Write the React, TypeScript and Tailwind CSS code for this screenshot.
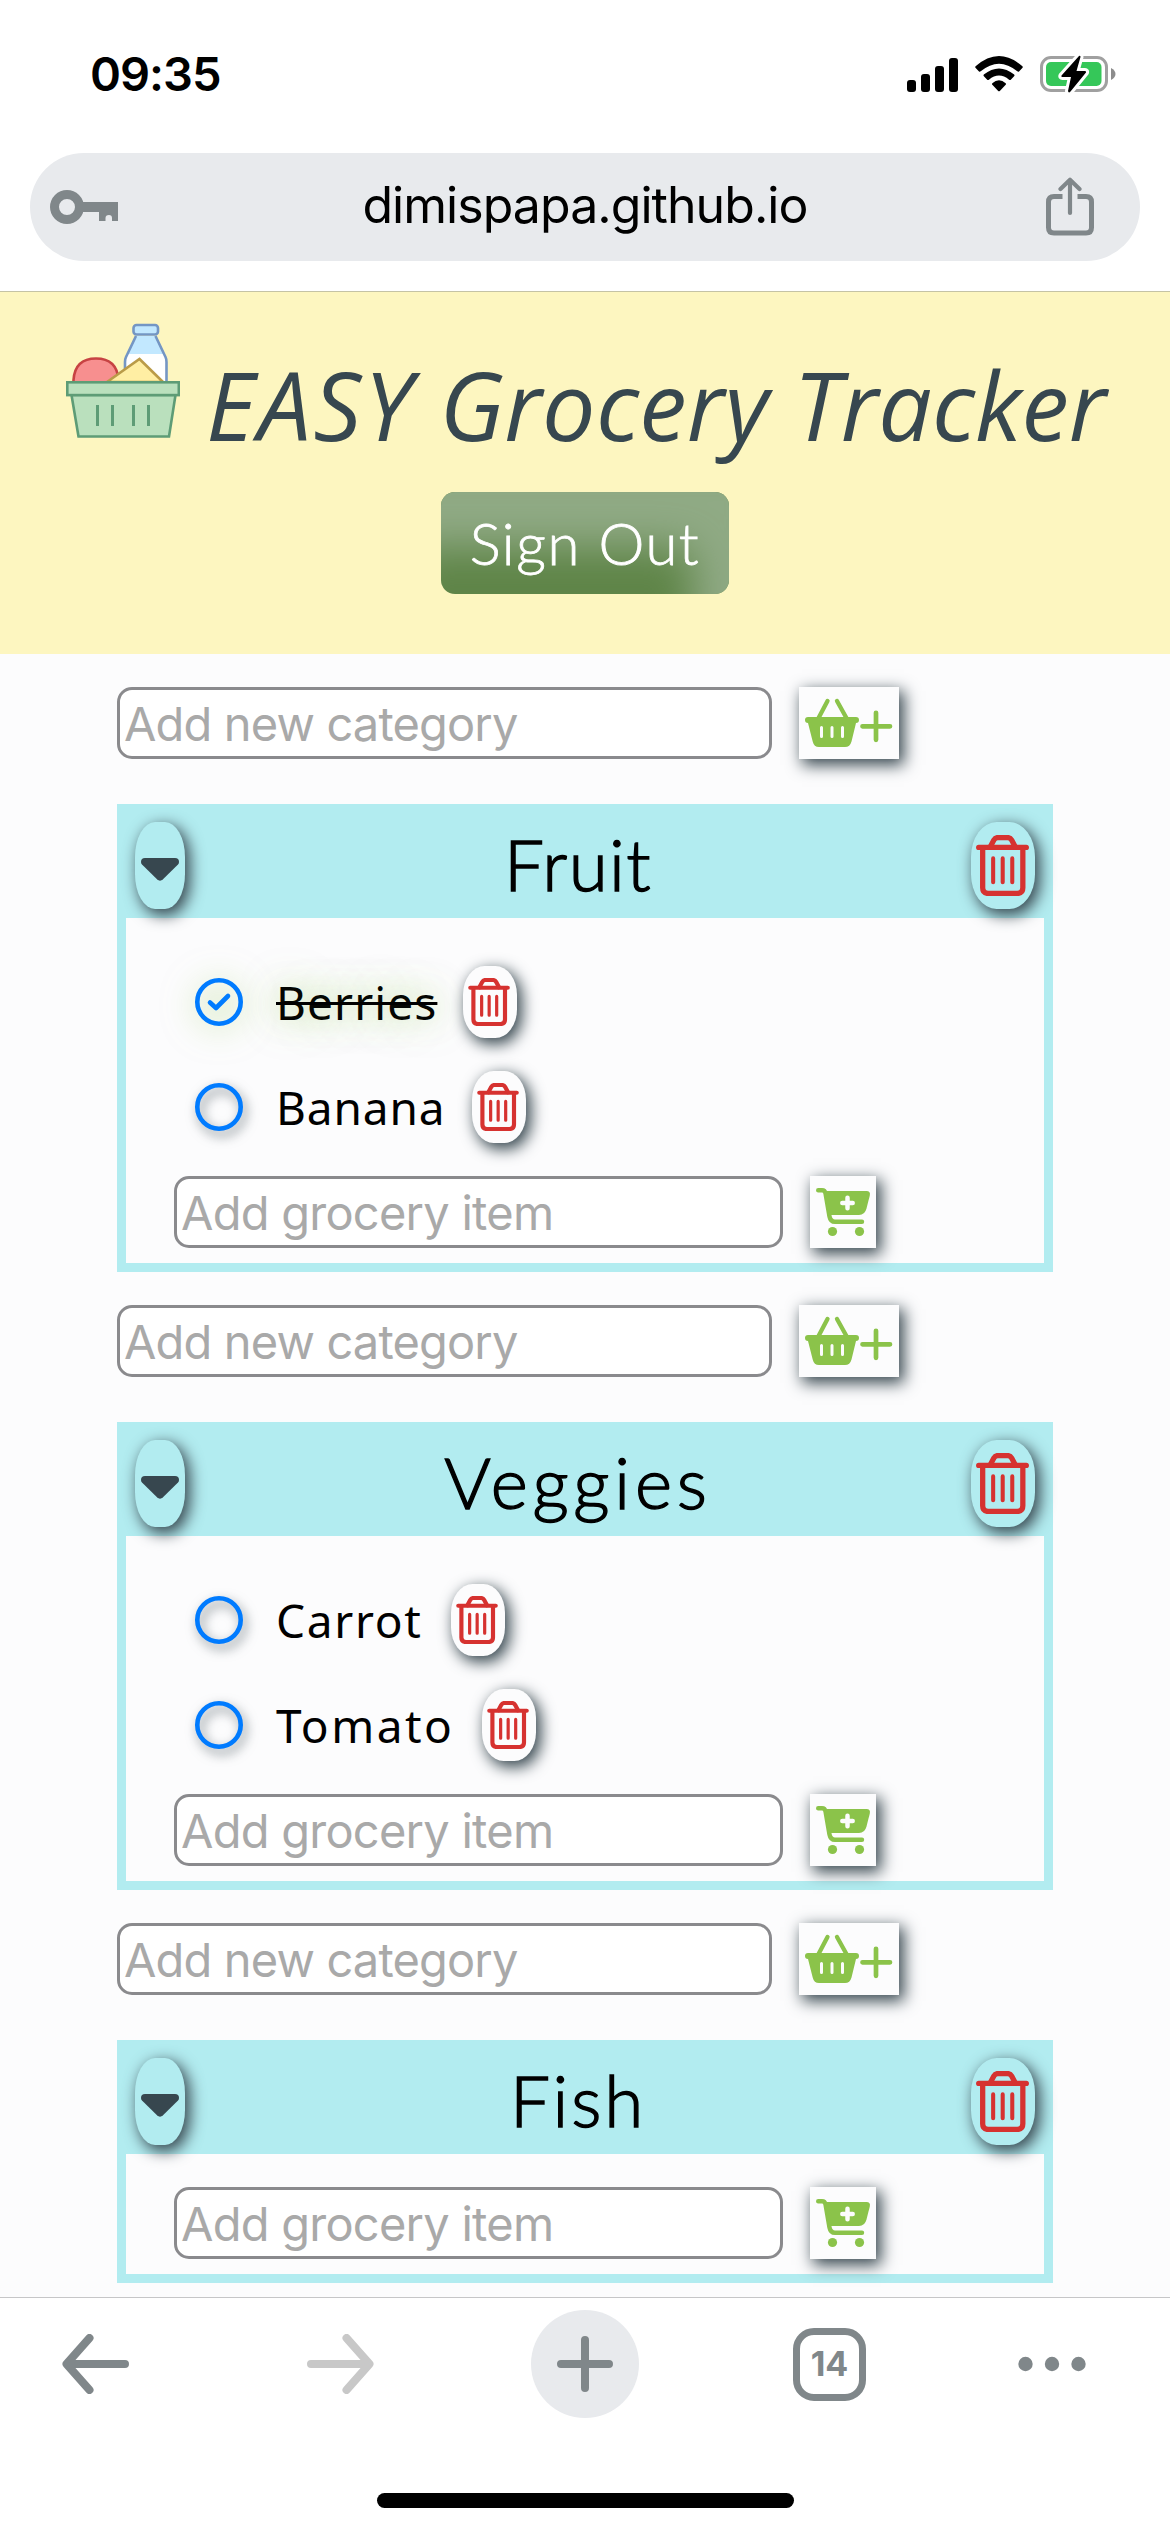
import React from "react";

const SHADOW = "shadow-[4px_5px_15px_1px_#37474f]";

function SignalIcon() {
  return (
    <svg className="h-[36px] w-[52px]" viewBox="0 0 52 36">
      <rect x="0" y="24" width="9" height="12" rx="3" />
      <rect x="14" y="18" width="9" height="18" rx="3" />
      <rect x="28" y="10" width="9" height="26" rx="3" />
      <rect x="42" y="2" width="9" height="34" rx="3" />
    </svg>
  );
}

function WifiIcon() {
  return (
    <svg className="h-[36px] w-[48px]" viewBox="0 0 48 36">
      <path d="M0.6 10.2 Q-0.3 11.2 0.7 12.1 L4 15.4 Q4.8 16.1 5.7 15.3 Q24 0 42.3 15.3 Q43.2 16.1 44 15.4 L47.3 12.1 Q48.3 11.2 47.4 10.2 Q24 -10.200 0.600 10.2 Z" />
      <path d="M8.800 18.500 Q8 19.400 8.900 20.300 L12.200 23.700 Q13 24.400 13.900 23.700 Q24 15.400 34.100 23.700 Q35 24.400 35.800 23.700 L39.100 20.300 Q40 19.400 39.200 18.500 Q24 6.500 8.800 18.500 Z" />
      <path d="M17.300 27.200 Q24 21.500 30.700 27.200 Q31.400 28 30.700 28.800 L24.800 34.900 Q24 35.700 23.200 34.900 L17.300 28.800 Q16.600 28 17.300 27.200 Z" />
    </svg>
  );
}

function BatteryIcon() {
  return (
    <svg className="h-[42px] w-[76px]" viewBox="0 0 76 42">
      <rect x="1.500" y="4.500" width="65" height="33" rx="9.500" fill="none" stroke="#a0a0a0" strokeWidth="3" />
      <rect x="6" y="9" width="55.500" height="24" rx="5" fill="#35c759" />
      <path d="M71 15 Q75.500 17.500 75.500 21 Q75.500 24.500 71 27 Z" fill="#8c8c8c" />
      <path
        d="M39 3 L21.500 22.500 Q20.800 24 22.500 24 H31 L28 38 Q28.500 40.500 30.500 38.500 L46 19.500 Q46.500 18 45 18 H36.500 L40.500 4 Q40.500 2 39 3 Z"
        fill="#000"
        stroke="#fff"
        strokeWidth="6"
        paintOrder="stroke"
        strokeLinejoin="round"
      />
    </svg>
  );
}

function KeyIcon() {
  return (
    <svg className="h-[36px] w-[70px]" viewBox="0 0 70 36" fill="#80878a">
      <path fillRule="evenodd" d="M17 1a17 17 0 1 0 0 34a17 17 0 1 0 0-34zM17 10a8 8 0 1 1 0 16a8 8 0 1 1 0-16z" />
      <path d="M32 13 H68 V32 H62 V29 Q62 26 59 26 Q55.500 26 55.500 29 V32 H49 V23 H32 Z" />
    </svg>
  );
}

function ShareIcon() {
  return (
    <svg className="h-[60px] w-[48px]" viewBox="0 0 48 60" fill="none" stroke="#80878a" strokeWidth="5">
      <path d="M16.500 19.500 H8 Q2.500 19.500 2.500 25 V50.500 Q2.500 56 8 56 H40 Q45.500 56 45.500 50.500 V25 Q45.500 19.500 40 19.500 H31.500" />
      <path d="M24 36 V3 M14.500 12 L24 2.800 L33.500 12" strokeLinecap="round" strokeLinejoin="round" strokeWidth="4.200" />
    </svg>
  );
}

function GroceryLogo() {
  return (
    <svg className="h-[116px] w-[114px] shrink-0" viewBox="66 323 114 116" strokeWidth="2.600">
      <path d="M136 336 L126 357 Q125 359 125 362 V384 H166.500 V362 Q166.500 359 165.500 357 L155.500 336 Z" fill="#fff" />
      <path d="M136 336 L128 354 H163.500 L155.500 336 Z" fill="#c2e8ff" />
      <path d="M136 336 L126 357 Q125 359 125 362 V384 H166.500 V362 Q166.500 359 165.500 357 L155.500 336" fill="none" stroke="#7496c4" />
      <rect x="133.500" y="325" width="24.500" height="9.500" rx="3" fill="#c2e8ff" stroke="#7496c4" />
      <path d="M73.500 384 V380 Q75 358.500 96 358.500 Q117 358.500 118.500 380 V384 Z" fill="#f78f8f" stroke="#c74343" />
      <path d="M107 382 L139.500 359 L163 382 Z" fill="#ffeea3" stroke="#ba9b48" />
      <path d="M71.500 395 L78.500 436.500 H169 L175.500 395 Z" fill="#bae0bd" stroke="#5e9c76" />
      <rect x="67.300" y="382.300" width="111.500" height="12.800" fill="#bae0bd" stroke="#5e9c76" />
      <path d="M97.500 405 V426 M112.500 405 V426 M133.500 405 V426 M148.500 405 V426" stroke="#5e9c76" strokeWidth="3" />
    </svg>
  );
}

function BasketAddIcon() {
  return (
    <svg className="h-[72px] w-[100px]" viewBox="0 0 100 72" fill="#8bc34a">
      <path d="M28.500 14 L19 32 M38 14 L48 32" stroke="#8bc34a" strokeWidth="4.300" strokeLinecap="round" />
      <path d="M9 30 H57 Q60 30 60 33 Q60 36 57 36 L52.500 54.500 Q51 60 46 60 H20 Q15 60 13.700 54.500 L9 36 Q6 36 6 33 Q6 30 9 30 Z" />
      <path d="M22.500 40.500 V49.500 M33 40.500 V49.500 M43.500 40.500 V49.500" stroke="#fcfcfd" strokeWidth="3" strokeLinecap="round" />
      <path d="M63.500 39.300 H91 M77 25.800 V52.800" stroke="#8bc34a" strokeWidth="4.700" strokeLinecap="round" />
    </svg>
  );
}

function CartAddIcon() {
  return (
    <svg className="h-[72px] w-[66px]" viewBox="0 0 66 72" fill="#8bc34a">
      <path d="M8.200 14.200 H12 Q15 14.200 15.500 17.500 L19.500 40.500 Q20.500 45.800 25 45.800 H52" fill="none" stroke="#8bc34a" strokeWidth="4.400" strokeLinecap="round" />
      <path d="M14 15 H56.500 Q60.800 15 59.800 19.500 L56.500 32.500 Q54.800 39 49 39 H18 Z" />
      <circle cx="22.500" cy="55.500" r="4.600" />
      <circle cx="49.500" cy="55.500" r="4.600" />
      <path d="M32.300 27 H42.700 M37.500 21.800 V32.200" stroke="#fcfcfd" strokeWidth="4.500" strokeLinecap="round" />
    </svg>
  );
}

function TrashIcon({ className }: { className: string }) {
  return (
    <svg className={className} viewBox="5 13.500 52 60" fill="none" stroke="#d63230" strokeWidth="5.200" strokeLinecap="round" strokeLinejoin="round">
      <path d="M7.600 25.700 H54.400" />
      <path d="M19 25 L22.500 18.500 Q23.800 16 26.500 16 H36 Q38.700 16 40 18.500 L43.500 25" />
      <path d="M11.500 27 V65.500 Q11.500 71 17 71 H45.500 Q51 71 51 65.500 V27" />
      <path d="M21.800 36.500 V60 M31.200 36.500 V60 M40.600 36.500 V60" strokeWidth="4" />
    </svg>
  );
}

function CheckIcon({ checked }: { checked: boolean }) {
  return (
    <svg
      className={
        checked
          ? "h-[48px] w-[48px] overflow-visible drop-shadow-[0px_3px_16px_rgba(139,195,74,0.6)]"
          : "h-[48px] w-[48px] overflow-visible drop-shadow-[3px_5px_6px_rgba(55,71,79,0.65)]"
      }
      viewBox="0 0 48 48"
      fill="none"
      stroke="#007bff"
      strokeWidth="4.600"
      strokeLinecap="round"
      strokeLinejoin="round"
    >
      <circle cx="24" cy="24" r="21.700" />
      {checked && <path d="M15 24.500 L21 30 L33 18" />}
    </svg>
  );
}

type Item = { name: string; checked?: boolean; label: string };

function AddCategory() {
  return (
    <div className="mb-[45px] flex h-[72px] gap-[27px]">
      <input
        placeholder="Add new category"
        className="h-[72px] w-[655px] rounded-[15px] border-[3px] border-[#8a8a8d] bg-white pl-[4px] font-['Inter'] text-[47px] tracking-[-0.85px] placeholder:text-[#a9a9a9]"
      />
      <button className={`h-[72px] w-[100px] bg-[#fcfcfd] ${SHADOW}`}>
        <BasketAddIcon />
      </button>
    </div>
  );
}

function Category({ title, tracking, items }: { title: string; tracking: string; items: Item[] }) {
  return (
    <section className="mb-[33px] border-[9px] border-[#b2ecf0]">
      <header className="flex h-[105px] items-start justify-between bg-[#b2ecf0] px-[9px] pt-[9px]">
        <button className={`flex h-[87px] w-[50px] justify-center rounded-[40%] bg-[#b2ecf0] pt-[36px] ${SHADOW}`}>
          <svg className="h-[23px] w-[38px]" viewBox="0 0 38 23" fill="#37474f">
            <path d="M4 0 H34 Q38 0 38 4 Q38 5.500 37 6.500 L22 21.300 Q19 24 16 21.300 L1 6.500 Q0 5.500 0 4 Q0 0 4 0 Z" />
          </svg>
        </button>
        <h2 className={`font-['Lato'] text-[71px] leading-[84px] font-light text-black [-webkit-text-stroke:1.4px_#000] ${tracking}`}>
          {title}
        </h2>
        <button className={`flex h-[87px] w-[64px] rounded-[40%] bg-[#b2ecf0] pt-[13px] pl-[5px] ${SHADOW}`}>
          <TrashIcon className="h-[61px] w-[53px]" />
        </button>
      </header>
      <div className="px-[48px] pt-[33px] pb-[15px]">
        {items.length > 0 && (
          <ul className="pt-[15px]">
            {items.map((item) => (
              <li key={item.name} className="mb-[33px] flex h-[72px] items-center pl-[21px]">
                <CheckIcon checked={!!item.checked} />
                <span className={`ml-[33px] shrink-0 font-['Noto_Sans'] text-[46px] leading-[72px] whitespace-nowrap text-black ${item.label}`}>
                  {item.name}
                </span>
                <button className={`ml-[27px] flex h-[72px] w-[54px] rounded-[40%] bg-[#fcfcfd] pt-[12px] pl-[5px] ${SHADOW}`}>
                  <TrashIcon className="h-[48px] w-[42px]" />
                </button>
              </li>
            ))}
          </ul>
        )}
        <div className="flex h-[72px] gap-[27px]">
          <input
            placeholder="Add grocery item"
            className="h-[72px] w-[609px] rounded-[15px] border-[3px] border-[#8a8a8d] bg-white pl-[4px] font-['Inter'] text-[47px] tracking-[-0.75px] placeholder:text-[#a9a9a9]"
          />
          <button className={`h-[72px] w-[66px] bg-[#fcfcfd] ${SHADOW}`}>
            <CartAddIcon />
          </button>
        </div>
      </div>
    </section>
  );
}

const CATEGORIES: { title: string; tracking: string; items: Item[] }[] = [
  {
    title: "Fruit",
    tracking: "tracking-[1.4px]",
    items: [
      {
        name: "Berries",
        checked: true,
        label: "w-[160px] tracking-[1.1px] line-through decoration-[3px] [text-shadow:0_0_36px_rgba(139,195,74,0.6)]",
      },
      { name: "Banana", label: "w-[169px] tracking-[0.9px]" },
    ],
  },
  {
    title: "Veggies",
    tracking: "tracking-[4.8px]",
    items: [
      { name: "Carrot", label: "w-[148px] tracking-[1.7px]" },
      { name: "Tomato", label: "w-[179px] tracking-[2.5px]" },
    ],
  },
  { title: "Fish", tracking: "tracking-[2.8px]", items: [] },
];

export default function App() {
  return (
    <div className="flex h-[2532px] w-[1170px] flex-col overflow-hidden bg-white">
      <div className="flex h-[153px] shrink-0 items-start justify-between pr-[54px] pl-[90px]">
        <div className="pt-[46px] font-['Inter'] text-[47px] leading-[56px] font-semibold tracking-[-1px] text-black">09:35</div>
        <div className="flex items-center pt-[53px]">
          <SignalIcon />
          <span className="w-[16px]" />
          <WifiIcon />
          <span className="w-[17px]" />
          <BatteryIcon />
        </div>
      </div>

      <div className="h-[138px] shrink-0 px-[30px]">
        <div className="flex h-[108px] items-center justify-between rounded-full bg-[#e8eaed] pr-[46px] pl-[20px]">
          <KeyIcon />
          <span className="pb-[4px] pl-[4px] font-['Inter'] text-[50px] leading-[60px] tracking-[-0.95px] text-black">
            dimispapa.github.io
          </span>
          <ShareIcon />
        </div>
      </div>

      <div className="flex h-[363px] shrink-0 flex-col items-center border-t border-[#c5c3a5] bg-[#fdf6c0]">
        <div className="flex h-[200px] w-full items-start pl-[66px]">
          <div className="pt-[31px]">
            <GroceryLogo />
          </div>
          <h1 className="pt-[47px] pl-[26px] font-['Open_Sans'] text-[95px] leading-[130px] whitespace-nowrap text-[#37474f] italic">
            <span className="tracking-[2.6px]">EASY</span> <span className="tracking-[0.3px]">Grocery</span> Tracker
          </h1>
        </div>
        <button className="h-[102px] w-[288px] rounded-[14px] bg-[#5f8548] font-['Lato'] text-[58px] leading-[100px] font-light tracking-[1.6px] text-white shadow-[inset_-36px_55px_40px_#90aa85] [-webkit-text-stroke:0.8px_#fff]">
          Sign Out
        </button>
      </div>

      <main className="min-h-0 flex-1 overflow-hidden bg-[#fcfcfd] px-[117px] pt-[33px]">
        {CATEGORIES.map((c) => (
          <React.Fragment key={c.title}>
            <AddCategory />
            <Category title={c.title} tracking={c.tracking} items={c.items} />
          </React.Fragment>
        ))}
      </main>

      <footer className="flex h-[235px] shrink-0 flex-col items-center border-t border-[#c6c6c8] bg-white">
        <div className="flex h-[132px] w-full items-center pl-[62px]">
          <svg className="h-[60px] w-[68px]" viewBox="0 0 68 60" fill="none" stroke="#80878a" strokeWidth="8" strokeLinecap="round" strokeLinejoin="round">
            <path d="M63 30 H6 M27.500 4 L4.500 30 L27.500 56" />
          </svg>
          <svg className="ml-[176px] h-[60px] w-[68px]" viewBox="0 0 68 60" fill="none" stroke="#c8c8c8" strokeWidth="8" strokeLinecap="round" strokeLinejoin="round">
            <path d="M5 30 H62 M40.500 4 L63.500 30 L40.500 56" />
          </svg>
          <div className="ml-[157px] flex size-[108px] items-center justify-center rounded-full bg-[#e8eaed]">
            <svg className="size-[60px]" viewBox="0 0 60 60" fill="none" stroke="#80878a" strokeWidth="8" strokeLinecap="round">
              <path d="M6 30 H54 M30 6 V54" />
            </svg>
          </div>
          <div className="ml-[154px] flex size-[73px] items-center justify-center rounded-[21px] border-[7px] border-[#80878a] font-['Inter'] text-[34px] leading-none font-bold text-[#80878a]">
            14
          </div>
          <svg className="ml-[152px] h-[16px] w-[68px]" viewBox="0 0 68 16" fill="#80878a">
            <circle cx="7.500" cy="8" r="7.200" />
            <circle cx="34" cy="8" r="7.200" />
            <circle cx="60.500" cy="8" r="7.200" />
          </svg>
        </div>
        <div className="mt-[63px] h-[15px] w-[417px] rounded-full bg-black" />
      </footer>
    </div>
  );
}
